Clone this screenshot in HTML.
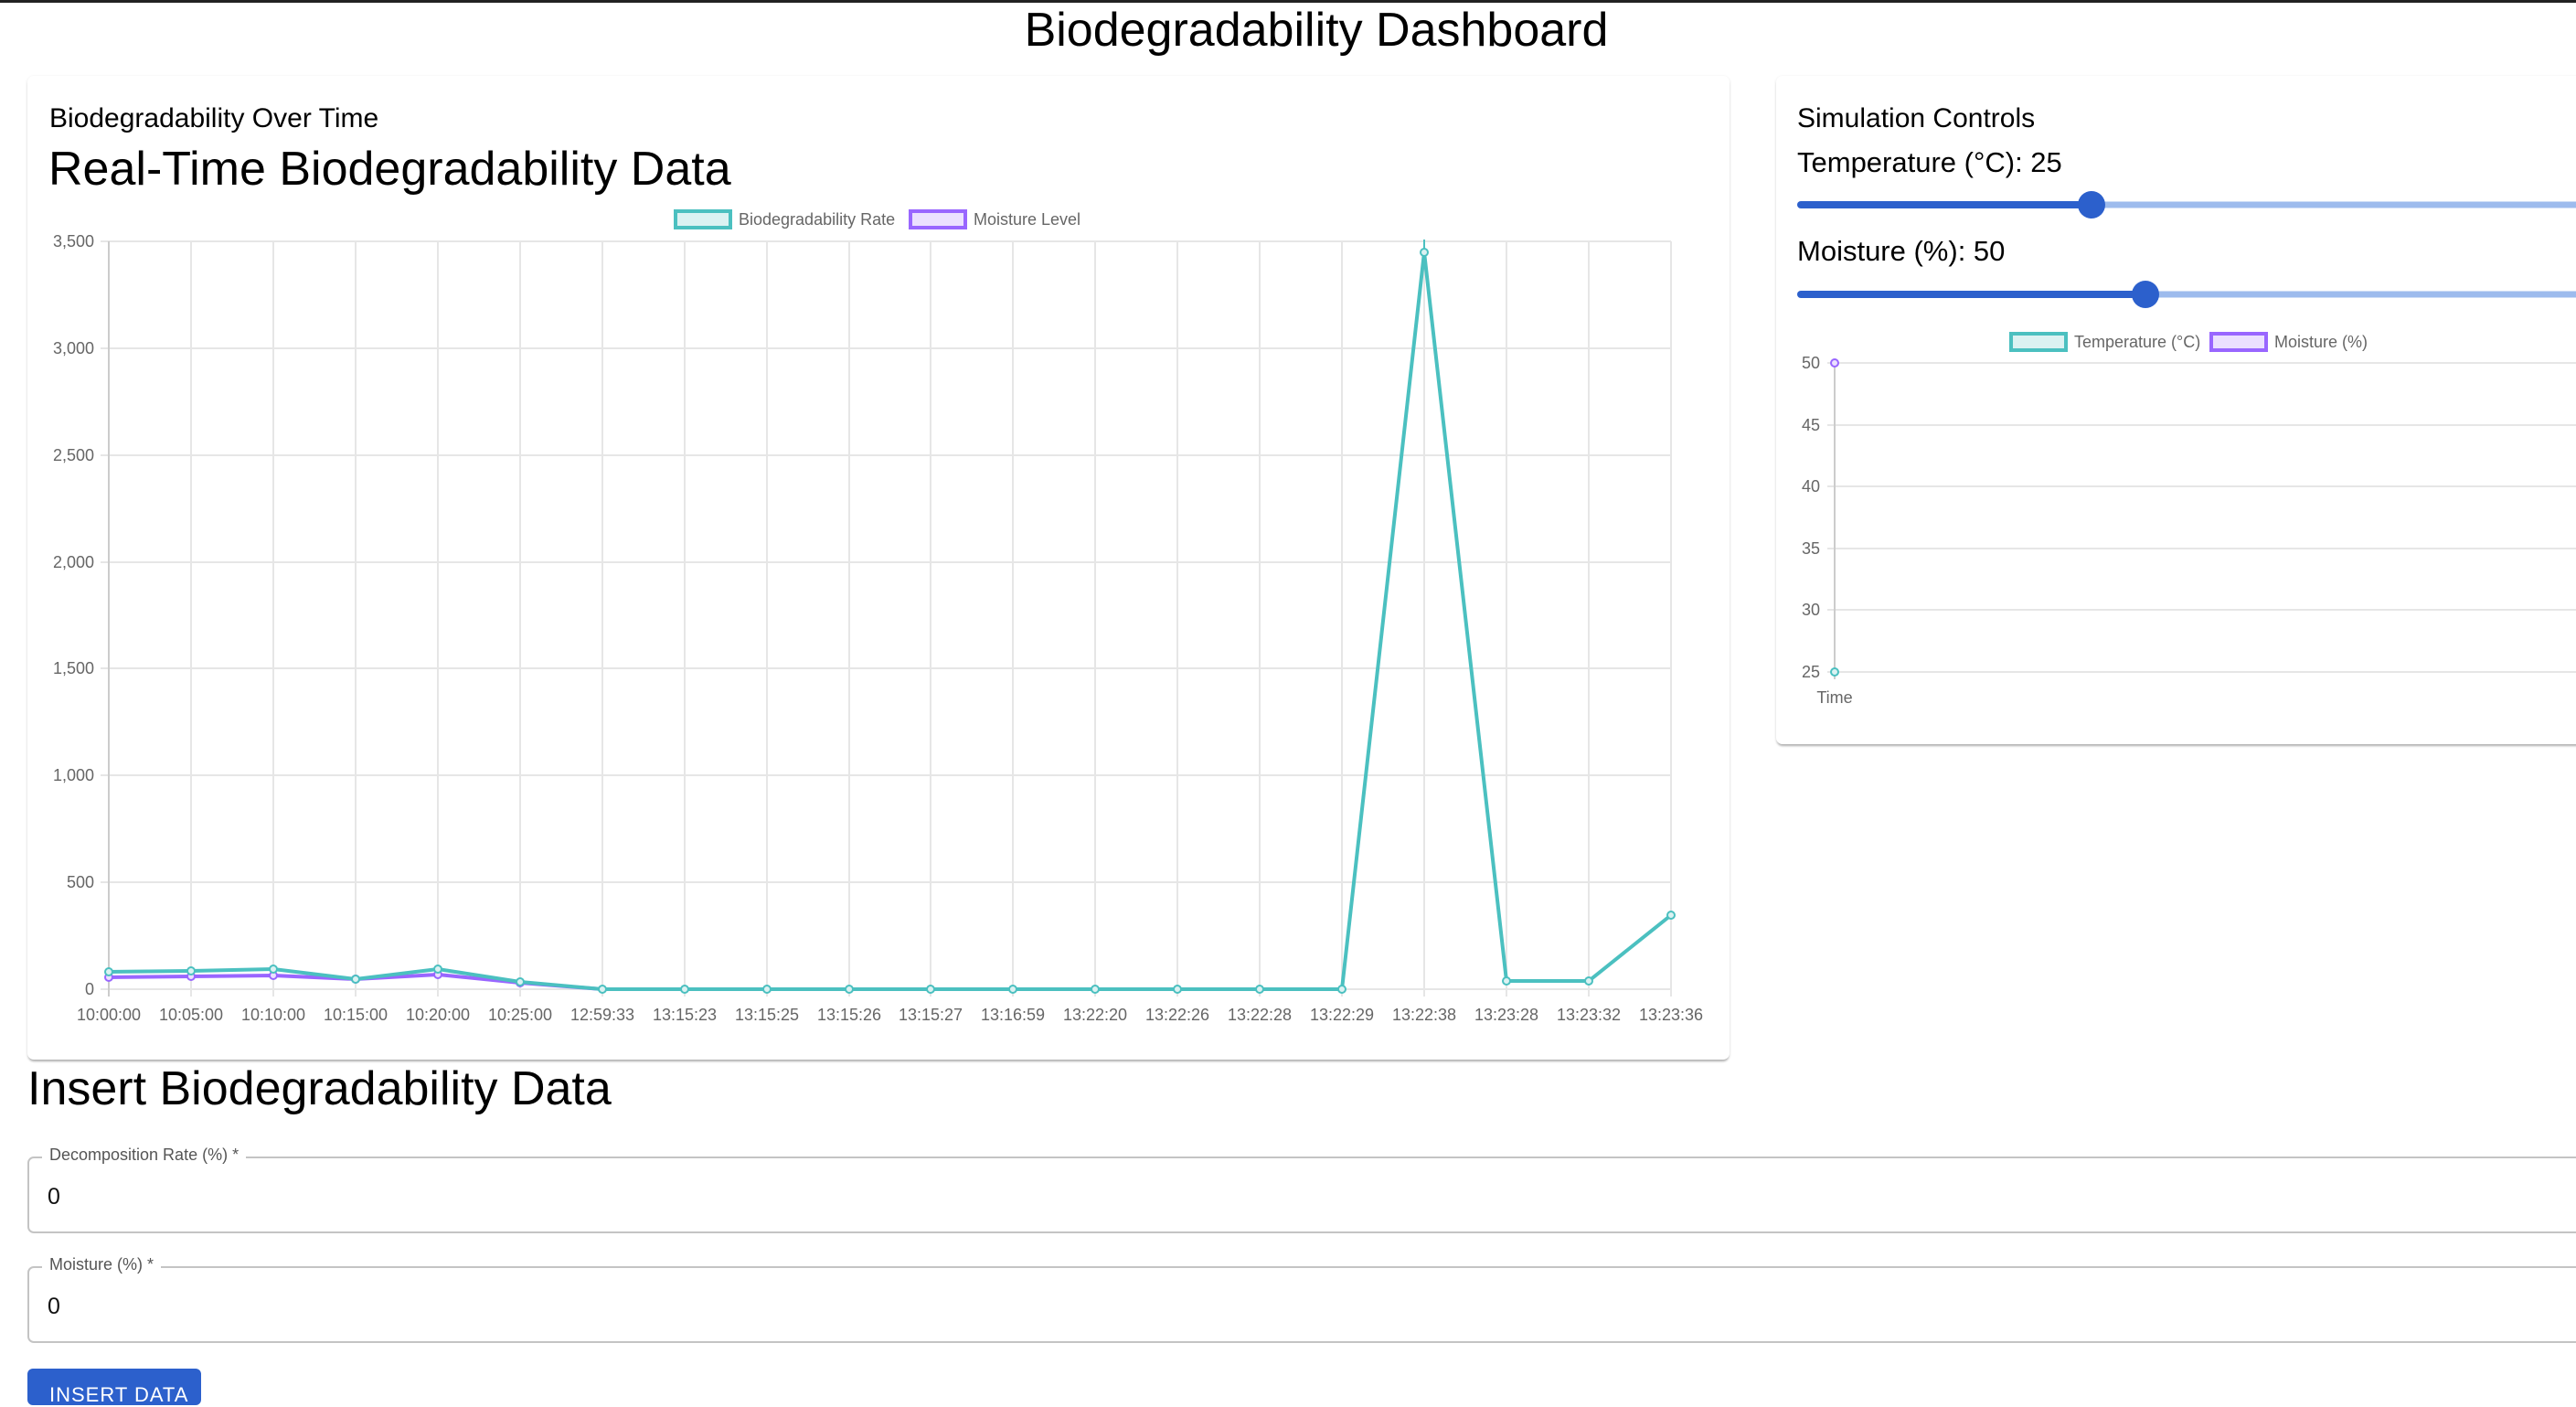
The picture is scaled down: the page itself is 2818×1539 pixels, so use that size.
<!DOCTYPE html>
<html><head><meta charset="utf-8"><style>
*{box-sizing:border-box;margin:0;padding:0}
body{width:2818px;height:1520px;overflow:hidden;background:#fff;font-family:"Liberation Sans",Arial,sans-serif;color:#000;position:relative}
.abs{position:absolute;white-space:nowrap}
.card{position:absolute;background:#fff;border-radius:7px;box-shadow:0 3px 2px -1px rgba(0,0,0,.25),0 1px 3px rgba(0,0,0,.12)}
.field{position:absolute;left:30px;right:-10px;border:2px solid #c4c4c4;border-radius:7px}
.field .lab{position:absolute;top:-14px;left:14px;background:#fff;padding:0 8px;font-size:18px;color:#555}
.field .val{position:absolute;left:20px;font-size:25px;color:#111}
</style></head><body>
<div class="abs" style="left:0;top:0;width:2818px;height:3px;background:#222"></div>
<div class="abs" style="left:0;width:2880px;top:3px;text-align:center;font-size:52px">Biodegradability Dashboard</div>

<div class="card" style="left:30px;top:83px;width:1862px;height:1076px"></div>
<div class="abs" style="left:54px;top:113px;font-size:30px">Biodegradability Over Time</div>
<div class="abs" style="left:53px;top:155px;font-size:52px">Real-Time Biodegradability Data</div>

<svg class="abs" style="left:0;top:0" width="1900" height="1160" font-family="Liberation Sans,Arial,sans-serif">
<rect x="739" y="231" width="60" height="18" fill="#dbf2f2" stroke="#4bc0c0" stroke-width="4"/>
<text x="808" y="246" font-size="18" fill="#666">Biodegradability Rate</text>
<rect x="996" y="231" width="60" height="18" fill="#ebe0ff" stroke="#9966ff" stroke-width="4"/>
<text x="1065" y="246" font-size="18" fill="#666">Moisture Level</text>
<g stroke="#e6e6e6" stroke-width="2">
<line x1="110" y1="264" x2="1828" y2="264"/><line x1="110" y1="381" x2="1828" y2="381"/><line x1="110" y1="498" x2="1828" y2="498"/><line x1="110" y1="615" x2="1828" y2="615"/><line x1="110" y1="731" x2="1828" y2="731"/><line x1="110" y1="848" x2="1828" y2="848"/><line x1="110" y1="965" x2="1828" y2="965"/><line x1="110" y1="1082" x2="1828" y2="1082"/>
<line x1="209" y1="264" x2="209" y2="1090"/><line x1="299" y1="264" x2="299" y2="1090"/><line x1="389" y1="264" x2="389" y2="1090"/><line x1="479" y1="264" x2="479" y2="1090"/><line x1="569" y1="264" x2="569" y2="1090"/><line x1="659" y1="264" x2="659" y2="1090"/><line x1="749" y1="264" x2="749" y2="1090"/><line x1="839" y1="264" x2="839" y2="1090"/><line x1="929" y1="264" x2="929" y2="1090"/><line x1="1018" y1="264" x2="1018" y2="1090"/><line x1="1108" y1="264" x2="1108" y2="1090"/><line x1="1198" y1="264" x2="1198" y2="1090"/><line x1="1288" y1="264" x2="1288" y2="1090"/><line x1="1378" y1="264" x2="1378" y2="1090"/><line x1="1468" y1="264" x2="1468" y2="1090"/><line x1="1558" y1="264" x2="1558" y2="1090"/><line x1="1648" y1="264" x2="1648" y2="1090"/><line x1="1738" y1="264" x2="1738" y2="1090"/><line x1="1828" y1="264" x2="1828" y2="1090"/>
</g>
<line x1="119" y1="264" x2="119" y2="1090" stroke="#ccc" stroke-width="2"/>
<g font-size="18" fill="#666" text-anchor="end">
<text x="103" y="270">3,500</text><text x="103" y="387">3,000</text><text x="103" y="504">2,500</text><text x="103" y="621">2,000</text><text x="103" y="737">1,500</text><text x="103" y="854">1,000</text><text x="103" y="971">500</text><text x="103" y="1088">0</text>
</g>
<g font-size="18" fill="#666" text-anchor="middle">
<text x="119" y="1116">10:00:00</text><text x="209" y="1116">10:05:00</text><text x="299" y="1116">10:10:00</text><text x="389" y="1116">10:15:00</text><text x="479" y="1116">10:20:00</text><text x="569" y="1116">10:25:00</text><text x="659" y="1116">12:59:33</text><text x="749" y="1116">13:15:23</text><text x="839" y="1116">13:15:25</text><text x="929" y="1116">13:15:26</text><text x="1018" y="1116">13:15:27</text><text x="1108" y="1116">13:16:59</text><text x="1198" y="1116">13:22:20</text><text x="1288" y="1116">13:22:26</text><text x="1378" y="1116">13:22:28</text><text x="1468" y="1116">13:22:29</text><text x="1558" y="1116">13:22:38</text><text x="1648" y="1116">13:23:28</text><text x="1738" y="1116">13:23:32</text><text x="1828" y="1116">13:23:36</text>
</g>
<polyline fill="none" stroke="#9966ff" stroke-width="4" points="119,1069 209,1068 299,1067 389,1071 479,1066 569,1075 659,1082"/>
<g fill="#ebe0ff" stroke="#9966ff" stroke-width="2"><circle cx="119" cy="1069" r="4"/><circle cx="209" cy="1068" r="4"/><circle cx="299" cy="1067" r="4"/><circle cx="389" cy="1071" r="4"/><circle cx="479" cy="1066" r="4"/><circle cx="569" cy="1075" r="4"/></g>
<polyline fill="none" stroke="#4bc0c0" stroke-width="4" points="119,1063 209,1062 299,1060 389,1071 479,1060 569,1074 659,1082 749,1082 839,1082 929,1082 1018,1082 1108,1082 1198,1082 1288,1082 1378,1082 1468,1082 1558,276 1648,1073 1738,1073 1828,1001"/>
<line x1="1558" y1="262" x2="1558" y2="290" stroke="#4bc0c0" stroke-width="2"/>
<g fill="#dbf2f2" stroke="#4bc0c0" stroke-width="2"><circle cx="119" cy="1063" r="4"/><circle cx="209" cy="1062" r="4"/><circle cx="299" cy="1060" r="4"/><circle cx="389" cy="1071" r="4"/><circle cx="479" cy="1060" r="4"/><circle cx="569" cy="1074" r="4"/><circle cx="659" cy="1082" r="4"/><circle cx="749" cy="1082" r="4"/><circle cx="839" cy="1082" r="4"/><circle cx="929" cy="1082" r="4"/><circle cx="1018" cy="1082" r="4"/><circle cx="1108" cy="1082" r="4"/><circle cx="1198" cy="1082" r="4"/><circle cx="1288" cy="1082" r="4"/><circle cx="1378" cy="1082" r="4"/><circle cx="1468" cy="1082" r="4"/><circle cx="1558" cy="276" r="4"/><circle cx="1648" cy="1073" r="4"/><circle cx="1738" cy="1073" r="4"/><circle cx="1828" cy="1001" r="4"/></g>
</svg>

<div class="card" style="left:1943px;top:83px;width:900px;height:731px"></div>
<div class="abs" style="left:1966px;top:113px;font-size:30px">Simulation Controls</div>
<div class="abs" style="left:1966px;top:160px;font-size:31px">Temperature (°C): 25</div>
<div class="abs" style="left:1966px;top:257px;font-size:31px">Moisture (%): 50</div>
<svg class="abs" style="left:1900px;top:0" width="918" height="800" font-family="Liberation Sans,Arial,sans-serif">
<line x1="70" y1="224" x2="918" y2="224" stroke="#9dbbed" stroke-width="7" stroke-linecap="round"/>
<line x1="70" y1="224" x2="388" y2="224" stroke="#2c60cc" stroke-width="8" stroke-linecap="round"/>
<circle cx="388" cy="224" r="15" fill="#2c60cc"/>
<line x1="70" y1="322" x2="918" y2="322" stroke="#9dbbed" stroke-width="7" stroke-linecap="round"/>
<line x1="70" y1="322" x2="447" y2="322" stroke="#2c60cc" stroke-width="8" stroke-linecap="round"/>
<circle cx="447" cy="322" r="15" fill="#2c60cc"/>
<rect x="300" y="365" width="60" height="18" fill="#dbf2f2" stroke="#4bc0c0" stroke-width="4"/>
<text x="369" y="380" font-size="18" fill="#666">Temperature (°C)</text>
<rect x="519" y="365" width="60" height="18" fill="#ebe0ff" stroke="#9966ff" stroke-width="4"/>
<text x="588" y="380" font-size="18" fill="#666">Moisture (%)</text>
<g stroke="#e6e6e6" stroke-width="2"><line x1="99" y1="397" x2="918" y2="397"/><line x1="99" y1="465" x2="918" y2="465"/><line x1="99" y1="532" x2="918" y2="532"/><line x1="99" y1="600" x2="918" y2="600"/><line x1="99" y1="667" x2="918" y2="667"/><line x1="99" y1="735" x2="918" y2="735"/></g>
<line x1="107" y1="397" x2="107" y2="743" stroke="#ccc" stroke-width="2"/>
<g font-size="18" fill="#666" text-anchor="end"><text x="91" y="403">50</text><text x="91" y="471">45</text><text x="91" y="538">40</text><text x="91" y="606">35</text><text x="91" y="673">30</text><text x="91" y="741">25</text></g>
<text x="107" y="769" font-size="18" fill="#666" text-anchor="middle">Time</text>
<circle cx="107" cy="397" r="4" fill="#ebe0ff" stroke="#9966ff" stroke-width="2"/>
<circle cx="107" cy="735" r="4" fill="#dbf2f2" stroke="#4bc0c0" stroke-width="2"/>
</svg>

<div class="abs" style="left:30px;top:1161px;font-size:52px">Insert Biodegradability Data</div>
<div class="field" style="top:1265px;height:84px"><span class="lab">Decomposition Rate (%) *</span><span class="val" style="top:28px">0</span></div>
<div class="field" style="top:1385px;height:84px"><span class="lab">Moisture (%) *</span><span class="val" style="top:28px">0</span></div>
<div class="abs" style="left:30px;top:1497px;width:190px;height:40px;background:#2c60cc;border-radius:6px;color:#fff;font-size:22px;padding:16px 0 0 24px;letter-spacing:1px">INSERT DATA</div>
</body></html>
